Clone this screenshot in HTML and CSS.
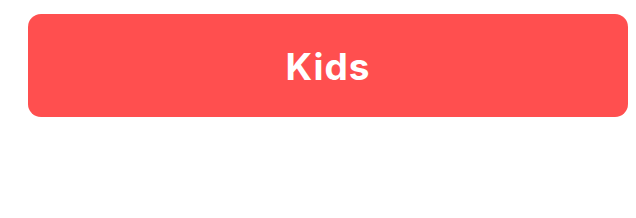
FILE: index.html
```html
<!DOCTYPE html>
<html>
<head>
<meta charset="utf-8">
<link rel="stylesheet" href="styles.css">
</head>
<body>
<div class="wrap">
  <button class="btn">Kids</button>
</div>
</body>
</html>
```

FILE: styles.css
```css
html, body { margin: 0; padding: 0; background: #fff; }
.wrap { padding: 14px 8px 0 28px; }
.btn {
  display: flex;
  align-items: center;
  justify-content: center;
  width: 600px;
  height: 103px;
  border: none;
  border-radius: 13px;
  background: #ff4f4f;
  color: #fff;
  font-family: Inter, "Liberation Sans", sans-serif;
  font-weight: 700;
  font-size: 37px;
  letter-spacing: 1px;
  padding: 1px 0 0 0;
  margin: 0;
}
```
